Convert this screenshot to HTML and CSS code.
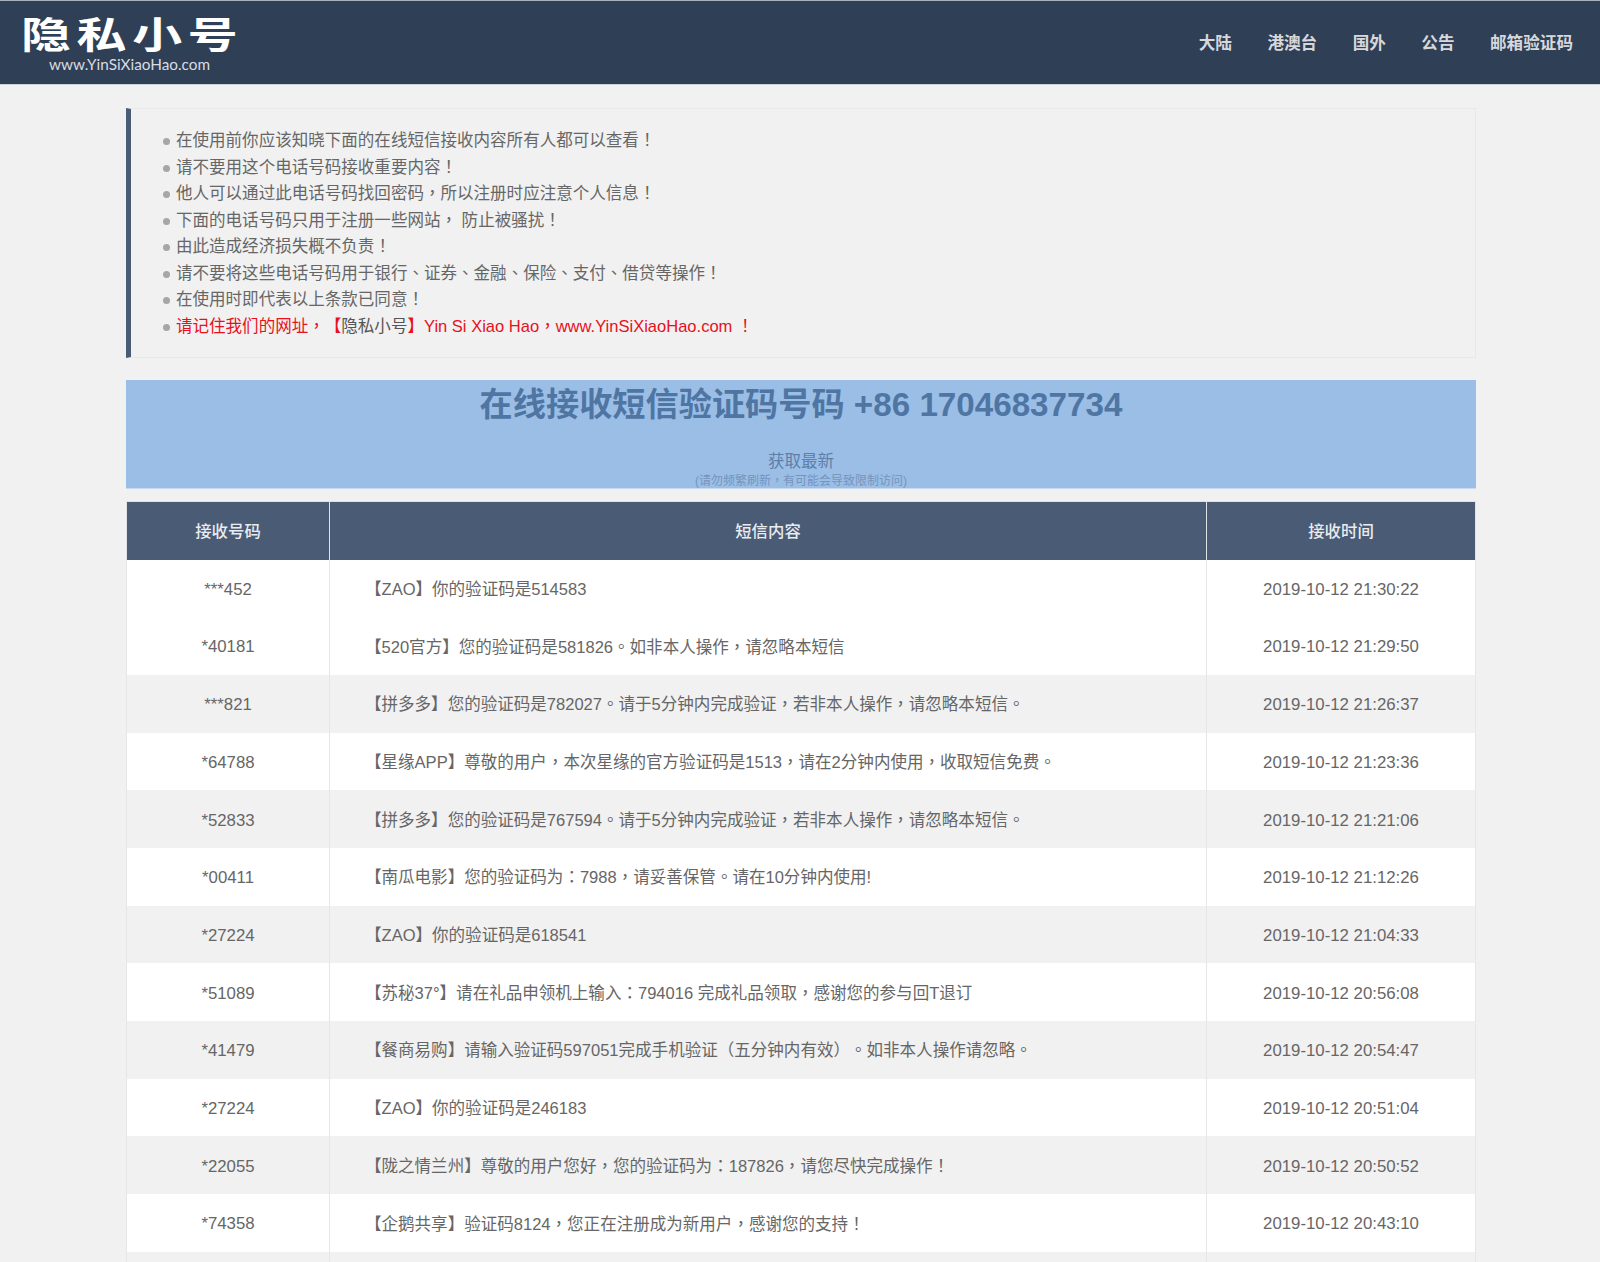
FILE: index.html
```html
<!DOCTYPE html>
<html>
<head>
<meta charset="utf-8">
<title>隐私小号</title>
<link rel="stylesheet" href="styles.css">
</head>
<body>
<header class="topbar">
  <a class="logo" href="#">
    <span class="logo-main">隐私小号</span>
    <span class="logo-sub">www.YinSiXiaoHao.com</span>
  </a>
  <nav class="nav">
    <a href="#">大陆</a>
    <a href="#">港澳台</a>
    <a href="#">国外</a>
    <a href="#">公告</a>
    <a href="#">邮箱验证码</a>
  </nav>
</header>
<main class="wrap">
  <section class="notice">
    <ul>
      <li>在使用前你应该知晓下面的在线短信接收内容所有人都可以查看<span class="p">！</span></li>
      <li>请不要用这个电话号码接收重要内容<span class="p">！</span></li>
      <li>他人可以通过此电话号码找回密码<span class="p">，</span>所以注册时应注意个人信息<span class="p">！</span></li>
      <li>下面的电话号码只用于注册一些网站<span class="p">，</span> 防止被骚扰<span class="p">！</span></li>
      <li>由此造成经济损失概不负责<span class="p">！</span></li>
      <li>请不要将这些电话号码用于银行<span class="p">、</span>证券<span class="p">、</span>金融<span class="p">、</span>保险<span class="p">、</span>支付<span class="p">、</span>借贷等操作<span class="p">！</span></li>
      <li>在使用时即代表以上条款已同意<span class="p">！</span></li>
      <li class="red">请记住我们的网址<span class="p">，</span>【<span class="dark">隐私小号</span>】Yin Si Xiao Hao<span class="p">，</span>www.YinSiXiaoHao.com <span class="p">！</span></li>
    </ul>
  </section>
  <section class="banner">
    <h1>在线接收短信验证码号码 +86 17046837734</h1>
    <a class="refresh" href="#">获取最新</a>
    <p class="hint">(请勿频繁刷新<span class="p">，</span>有可能会导致限制访问)</p>
  </section>
  <table class="sms">
    <colgroup><col class="c1"><col class="c2"><col class="c3"></colgroup>
    <thead><tr><th>接收号码</th><th>短信内容</th><th>接收时间</th></tr></thead>
    <tbody>
      <tr><td>***452</td><td>【ZAO】你的验证码是514583</td><td>2019-10-12 21:30:22</td></tr>
      <tr><td>*40181</td><td>【520官方】您的验证码是581826<span class="p">。</span>如非本人操作<span class="p">，</span>请忽略本短信</td><td>2019-10-12 21:29:50</td></tr>
      <tr class="alt"><td>***821</td><td>【拼多多】您的验证码是782027<span class="p">。</span>请于5分钟内完成验证<span class="p">，</span>若非本人操作<span class="p">，</span>请忽略本短信<span class="p">。</span></td><td>2019-10-12 21:26:37</td></tr>
      <tr><td>*64788</td><td>【星缘APP】尊敬的用户<span class="p">，</span>本次星缘的官方验证码是1513<span class="p">，</span>请在2分钟内使用<span class="p">，</span>收取短信免费<span class="p">。</span></td><td>2019-10-12 21:23:36</td></tr>
      <tr class="alt"><td>*52833</td><td>【拼多多】您的验证码是767594<span class="p">。</span>请于5分钟内完成验证<span class="p">，</span>若非本人操作<span class="p">，</span>请忽略本短信<span class="p">。</span></td><td>2019-10-12 21:21:06</td></tr>
      <tr><td>*00411</td><td>【南瓜电影】您的验证码为<span class="p">：</span>7988<span class="p">，</span>请妥善保管<span class="p">。</span>请在10分钟内使用!</td><td>2019-10-12 21:12:26</td></tr>
      <tr class="alt"><td>*27224</td><td>【ZAO】你的验证码是618541</td><td>2019-10-12 21:04:33</td></tr>
      <tr><td>*51089</td><td>【苏秘37°】请在礼品申领机上输入<span class="p">：</span>794016 完成礼品领取<span class="p">，</span>感谢您的参与回T退订</td><td>2019-10-12 20:56:08</td></tr>
      <tr class="alt"><td>*41479</td><td>【餐商易购】请输入验证码597051完成手机验证（五分钟内有效）<span class="p">。</span>如非本人操作请忽略<span class="p">。</span></td><td>2019-10-12 20:54:47</td></tr>
      <tr><td>*27224</td><td>【ZAO】你的验证码是246183</td><td>2019-10-12 20:51:04</td></tr>
      <tr class="alt"><td>*22055</td><td>【陇之情兰州】尊敬的用户您好<span class="p">，</span>您的验证码为<span class="p">：</span>187826<span class="p">，</span>请您尽快完成操作<span class="p">！</span></td><td>2019-10-12 20:50:52</td></tr>
      <tr><td>*74358</td><td>【企鹅共享】验证码8124<span class="p">，</span>您正在注册成为新用户<span class="p">，</span>感谢您的支持<span class="p">！</span></td><td>2019-10-12 20:43:10</td></tr>
      <tr class="alt"><td></td><td></td><td></td></tr>
    </tbody>
  </table>
</main>
</body>
</html>
```
FILE: styles.css
```css
* { box-sizing: border-box; }
html, body { margin: 0; height: 1262px; overflow: hidden; }
body {
  background: #f1f1f1;
  color: #666;
  font: 16.8px/1.5 "Liberation Sans", "Noto Sans CJK SC", sans-serif;
  text-spacing-trim: space-all;
}
a { color: inherit; text-decoration: none; }
.p { font-family: "Noto Sans CJK TC", sans-serif; line-height: 0; }

.topbar {
  height: 85px;
  background: #2f3f56;
  border-top: 1px solid #a9b1bd;
  border-bottom: 1px solid #c6d2e2;
  display: flex;
  justify-content: space-between;
  align-items: center;
  padding: 0 27px 0 21px;
}
.logo { display: flex; flex-direction: column; color: #fff; }
.logo-main {
  font: 700 37px/38px "Noto Sans CJK SC", sans-serif;
  letter-spacing: 4.2px;
  transform: scaleX(1.35);
  transform-origin: left center;
}
.logo-sub {
  font: 15.3px/16px "Lato", "Liberation Sans", sans-serif;
  color: #d9dce0;
  margin: 4px 0 0 28px;
}
.nav { display: flex; gap: 35.5px; margin-top: 4px; }
.nav a { color: #d6d8db; font-size: 16.6px; font-weight: 700; }

.wrap { width: 1350px; margin: 23px auto 0 126px; }

.notice {
  height: 250px;
  border: 1px solid #e8e8e8;
  border-left: 5px solid #4a5b75;
  padding: 19px 0 0 32px;
  font-size: 16.55px;
}
.notice ul { margin: 0; padding: 0 0 0 13px; list-style: none; }
.notice li { position: relative; line-height: 26.5px; }
.notice li::before {
  content: "";
  position: absolute;
  left: -13px;
  top: 10px;
  width: 7px;
  height: 7px;
  border-radius: 50%;
  background: #a6a6a6;
}
.red { color: #e8101c; }
.dark { color: #555; }

.banner {
  height: 109px;
  margin-top: 22px;
  background: #9bbee6;
  border-bottom: 1px solid #c9d9ee;
  text-align: center;
  color: #4f75a3;
  overflow: hidden;
}
.banner h1 {
  margin: 5px 0 0;
  font-size: 33.2px;
  line-height: 40px;
  font-weight: 700;
}
.refresh { display: block; margin-top: 25px; font-size: 16.5px; line-height: 22px; color: #5d7fa8; }
.hint { margin: 1px 0 0; font-size: 12px; line-height: 16px; color: #7594bb; }

.sms {
  width: 1350px;
  margin-top: 12px;
  border-collapse: collapse;
  table-layout: fixed;
  background: #fff;
}
.c1 { width: 203px; }
.c3 { width: 269px; }
.sms th {
  height: 58px;
  padding: 2px 0 0;
  background: #4a5b75;
  color: #e9ecef;
  font-size: 16.4px;
  font-weight: 500;
  border: 1px solid #dfe2e6;
  border-width: 1px 1px 0 1px;
}
.sms td {
  height: 57.7px;
  padding: 2px 0 0;
  text-align: center;
  border-left: 1px solid #e6e6e6;
  border-right: 1px solid #e6e6e6;
}
.sms td:nth-child(2) { text-align: left; padding: 4px 0 0 35px; font-size: 16.55px; }
.alt td { background: #f1f1f1; }
```
